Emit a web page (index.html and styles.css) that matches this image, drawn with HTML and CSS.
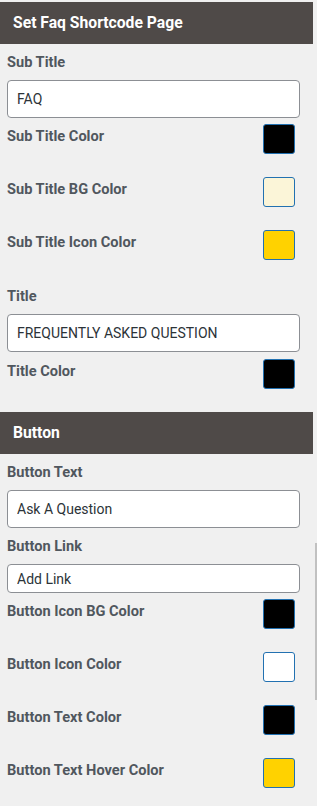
FILE: index.html
```html
<!DOCTYPE html>
<html lang="en">
<head>
  <meta charset="UTF-8" />
  <meta name="viewport" content="width=device-width, initial-scale=1.0"/>
  <title>Set Faq Shortcode Page</title>
  <link rel="stylesheet" href="styles.css">
</head>
<body>
  <div class="panel">
    <div class="section-head">Set Faq Shortcode Page</div>
    <div class="section">
      <label class="field-label">Sub Title</label>
      <input type="text" class="text-input" value="FAQ" />

      <div class="color-row">
        <span class="field-label">Sub Title Color</span>
        <span class="swatch" style="background:#000000"></span>
      </div>
      <div class="color-row">
        <span class="field-label">Sub Title BG Color</span>
        <span class="swatch" style="background:#fbf5d8"></span>
      </div>
      <div class="color-row">
        <span class="field-label">Sub Title Icon Color</span>
        <span class="swatch" style="background:#ffd200"></span>
      </div>

      <label class="field-label title-label">Title</label>
      <input type="text" class="text-input" value="FREQUENTLY ASKED QUESTION" />

      <div class="color-row last">
        <span class="field-label">Title Color</span>
        <span class="swatch" style="background:#000000"></span>
      </div>
    </div>

    <div class="section-head">Button</div>
    <div class="section">
      <label class="field-label">Button Text</label>
      <input type="text" class="text-input" value="Ask A Question" />

      <label class="field-label">Button Link</label>
      <input type="text" class="text-input small" value="Add Link" />

      <div class="color-row">
        <span class="field-label">Button Icon BG Color</span>
        <span class="swatch" style="background:#000000"></span>
      </div>
      <div class="color-row">
        <span class="field-label">Button Icon Color</span>
        <span class="swatch" style="background:#ffffff"></span>
      </div>
      <div class="color-row">
        <span class="field-label">Button Text Color</span>
        <span class="swatch" style="background:#000000"></span>
      </div>
      <div class="color-row">
        <span class="field-label">Button Text Hover Color</span>
        <span class="swatch" style="background:#ffd200"></span>
      </div>
    </div>
  </div>
  <div class="scroll-thumb"></div>
</body>
</html>
```

FILE: styles.css
```css
body {
  margin: 0;
  background: #f0f0f0;
  font-family: Roboto, "Liberation Sans", sans-serif;
  color: #50575e;
}
.panel {
  width: 313px;
  padding-top: 2px;
}
.section-head {
  height: 42px;
  line-height: 42px;
  padding-left: 13px;
  background: #4f4a48;
  color: #fff;
  font-size: 15.7px;
  font-weight: 700;
}
.section {
  display: flex;
  flex-direction: column;
  padding: 0 18px 7px 7px;
}
.field-label {
  display: block;
  font-size: 14.6px;
  font-weight: 700;
  line-height: 20px;
  margin-top: 8px;
}
.title-label {
  margin-top: 9px;
}
.text-input {
  box-sizing: border-box;
  width: 293px;
  height: 38px;
  margin-top: 8px;
  padding: 0 9px;
  border: 1px solid #8c8f94;
  border-radius: 4px;
  background: #fff;
  font-family: Roboto, "Liberation Sans", sans-serif;
  font-size: 14px;
  color: #2c3338;
}
.text-input.small {
  height: 29px;
}
.color-row {
  display: flex;
  justify-content: space-between;
  align-items: flex-start;
  height: 53px;
  padding-top: 6px;
  box-sizing: border-box;
}
.color-row.last {
  height: 53px;
  padding-top: 7px;
}
.color-row .field-label {
  margin-top: 2px;
}
.swatch {
  width: 32px;
  height: 30px;
  box-sizing: border-box;
  border: 1px solid #2271b1;
  border-radius: 3px;
}
.scroll-thumb {
  position: absolute;
  left: 315px;
  top: 543px;
  width: 2px;
  height: 157px;
  background: #c1c1c1;
}
```
